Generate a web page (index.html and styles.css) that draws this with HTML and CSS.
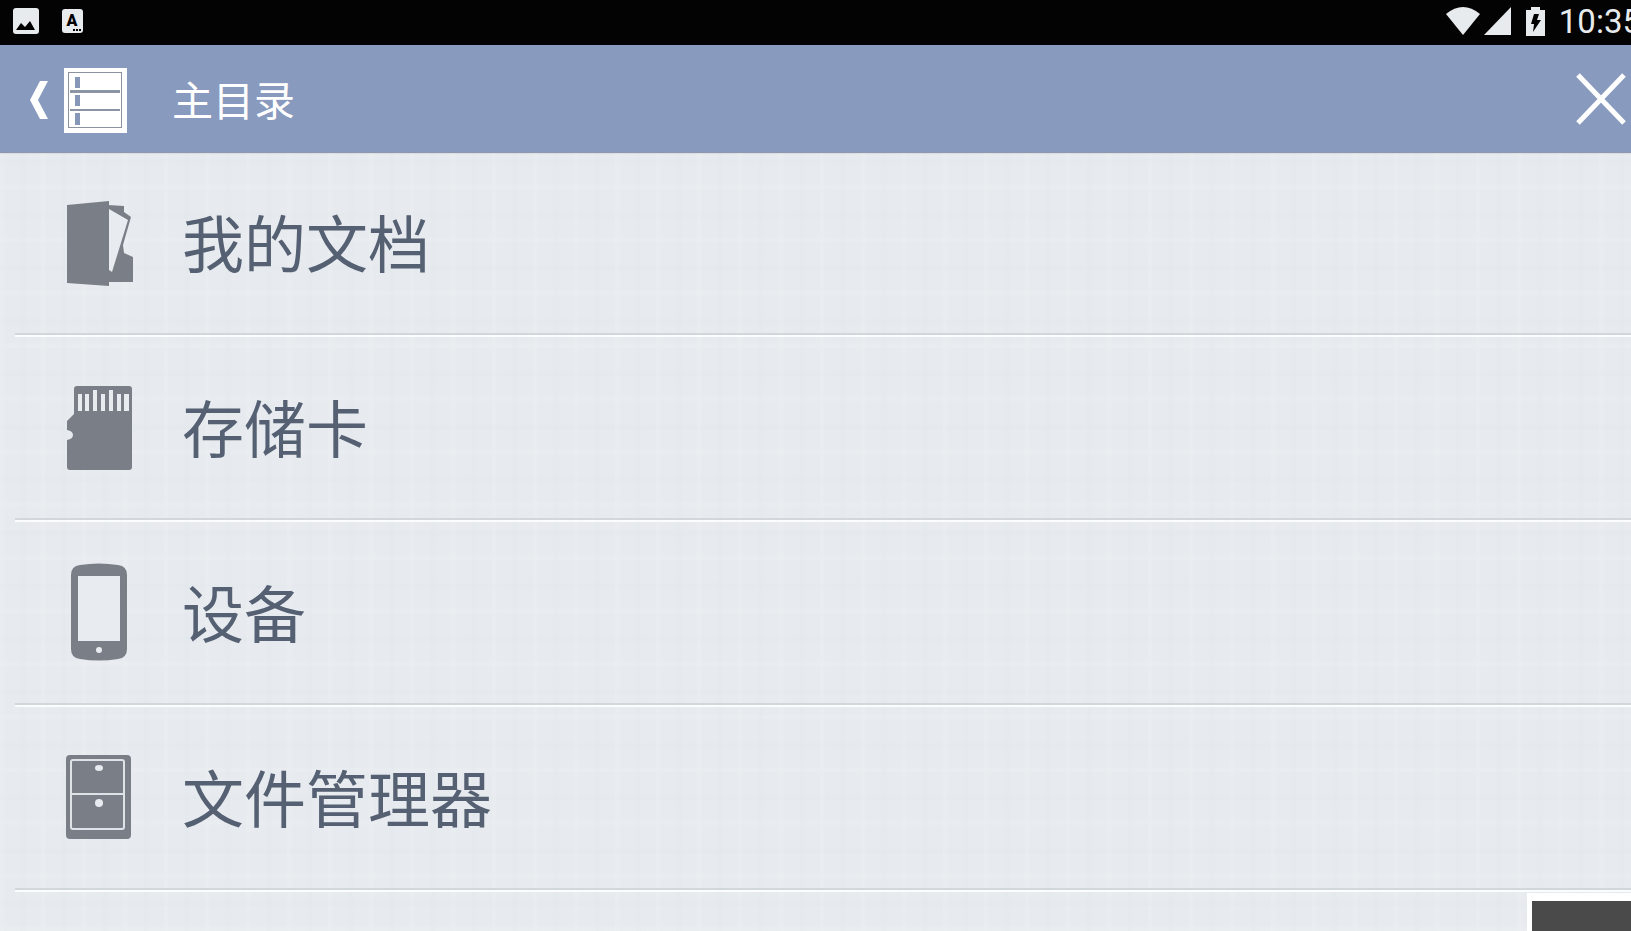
FILE: index.html
```html
<!DOCTYPE html>
<html lang="zh-CN">
<head>
  <meta charset="UTF-8">
  <meta name="viewport" content="width=device-width, initial-scale=1.0">
  <title>主目录</title>
  <link rel="stylesheet" href="styles.css">
</head>
<body>
  <div class="status-bar">
    <div class="status-left">
      <svg width="26" height="26" viewBox="0 0 26 26" aria-hidden="true">
        <rect width="26" height="26" rx="3" fill="#e8ebee"/>
        <path d="M3 22l5-7 4 4 5-6 5 9z" fill="#000"/>
      </svg>
      <svg width="22" height="26" viewBox="0 0 22 26" aria-hidden="true">
        <rect y="1" width="21" height="24" rx="3" fill="#e8ebee"/>
        <text class="keyboard-letter" x="10" y="18" text-anchor="middle">A</text>
        <path d="M11 21h2v2h-2zM14 21h2v2h-2zM17 21h2v2h-2z" fill="#000"/>
      </svg>
    </div>
    <div class="status-right">
      <svg width="34" height="28" viewBox="0 0 34 28" aria-hidden="true">
        <path d="M0 7Q17 -7 34 7L17 28z" fill="#e8ebee"/>
      </svg>
      <svg width="28" height="28" viewBox="0 0 28 28" aria-hidden="true">
        <path d="M27 0v28H0z" fill="#e8ebee"/>
      </svg>
      <svg class="battery" width="19" height="29" viewBox="0 0 19 29" aria-hidden="true">
        <path d="M5 0h9v3h5v26H0V3h5z" fill="#e8ebee"/>
        <path d="M8 7h5l-2 6h4L7 25l1-8H5z" fill="#000"/>
      </svg>
      <span class="clock">10:35</span>
    </div>
  </div>

  <header class="title-bar">
    <button type="button" class="btn-back" aria-label="返回">
      <svg width="18" height="38" viewBox="0 0 18 38" aria-hidden="true">
        <path d="M10 0h8L8 19l10 19h-8L0 19z" fill="#fff"/>
      </svg>
      <svg width="63" height="65" viewBox="0 0 63 65" aria-hidden="true">
        <rect width="63" height="65" fill="#fff"/>
        <rect x="4.500" y="4.500" width="53" height="55" fill="none" stroke="#8c929e"/>
        <path d="M6 22h50v3H6zM6 41h50v2H6z" fill="#8c95a3"/>
        <path d="M11 9h5v11h-5zM11 27h5v11h-5zM11 45h5v12h-5z" fill="#8797b8"/>
      </svg>
    </button>
    <h1>主目录</h1>
    <button type="button" class="btn-close" aria-label="关闭">
      <svg width="50" height="54" viewBox="0 0 50 54" aria-hidden="true">
        <path d="M2 2L48 50M48 2L2 50" stroke="#fff" stroke-width="5"/>
      </svg>
    </button>
  </header>

  <main>
    <ul class="folder-list">
      <li>
        <a href="#documents">
          <svg width="72" height="100" viewBox="0 0 72 100" aria-hidden="true">
            <path d="M3 12L45 8V93L3 90z" fill="#7a7e86"/>
            <path d="M44 12L60 13V19L67 24L59 52L60 60L69 64V89H44z" fill="#7a7e86"/>
            <path d="M45 16L64 27L48 79L45 77z" fill="#e8ecf0"/>
          </svg>
          <span>我的文档</span>
        </a>
      </li>
      <li>
        <a href="#sdcard">
          <svg width="72" height="100" viewBox="0 0 72 100" aria-hidden="true">
            <path d="M13 8H65Q68 8 68 11V89Q68 92 65 92H6Q3 92 3 89V62Q9 61 9 57Q9 53 3 52V43L10 36V11Q10 8 13 8z" fill="#7a7e86"/>
            <path d="M14 16h4v17h-4zM21 16h4v17h-4zM29 12h4v21h-4zM37 16h4v17h-4zM45 12h4v21h-4zM53 16h4v17h-4zM60 16h5v17h-5z" fill="#e8ecf0"/>
          </svg>
          <span>存储卡</span>
        </a>
      </li>
      <li>
        <a href="#device">
          <svg width="72" height="100" viewBox="0 0 72 100" aria-hidden="true">
            <path d="M16 2Q35 -1 54 2Q63 3 63 12V86Q63 95 54 96Q35 99 16 96Q7 95 7 86V12Q7 3 16 2z" fill="#7a7e86"/>
            <rect x="14" y="13" width="42" height="65" fill="#e8ecf0"/>
            <circle cx="35" cy="87" r="3" fill="#e8ecf0"/>
          </svg>
          <span>设备</span>
        </a>
      </li>
      <li>
        <a href="#file-manager">
          <svg width="72" height="100" viewBox="0 0 72 100" aria-hidden="true">
            <rect x="2" y="7" width="65" height="84" rx="4" fill="#7a7e86"/>
            <rect x="7" y="12" width="53" height="69" rx="2" fill="none" stroke="#dfe3e8" stroke-width="2"/>
            <path d="M7 46h53" stroke="#dfe3e8" stroke-width="2"/>
            <ellipse cx="35" cy="20" rx="4" ry="3" fill="#e8ecf0"/>
            <circle cx="35" cy="55" r="4" fill="#e8ecf0"/>
          </svg>
          <span>文件管理器</span>
        </a>
      </li>
    </ul>
  </main>

  <div class="corner-panel"></div>
</body>
</html>
```
FILE: styles.css
```css
:root {
  --bar: #889abe;
  --background: #e7ebef;
  --text: #556073;
  --status: #e8ebee;
}

* {
  margin: 0;
  padding: 0;
  box-sizing: border-box;
}

body {
  min-height: 100vh;
  overflow: hidden;
  font-family: 'Noto Sans CJK SC', sans-serif;
  color: var(--text);
  background-color: var(--background);
  /* faint linen texture */
  background-image:
    repeating-linear-gradient(90deg, rgba(255,255,255,0.08) 0 3px, transparent 6px 19px, rgba(200,212,220,0.08) 23px, transparent 27px 41px),
    repeating-linear-gradient(0deg, rgba(255,255,255,0.08) 0 3px, transparent 6px 23px, rgba(200,212,220,0.08) 27px, transparent 31px 53px);
}

svg {
  display: block;
  flex-shrink: 0;
}

button {
  background: none;
  border: none;
  cursor: pointer;
}

.status-bar {
  display: flex;
  justify-content: space-between;
  height: 45px;
  padding: 0 0 3px 13px;
  background-color: #030303;
  overflow: hidden;
}

.status-left, .status-right {
  display: flex;
  align-items: center;
}

.status-left {
  gap: 23px;
}

.keyboard-letter {
  font-family: Roboto, sans-serif;
  font-size: 16px;
  font-weight: 900;
}

/* the clock runs past the right edge of the screen */
.status-right {
  gap: 4px;
  margin-right: -10px;
}

.battery {
  margin: 0 10px;
}

.clock {
  padding-top: 2px;
  font-family: Roboto, sans-serif;
  font-size: 33px;
  line-height: 42px;
  color: var(--status);
  white-space: nowrap;
}

.title-bar {
  display: flex;
  align-items: center;
  height: 107px;
  padding: 3px 5px 0 30px;
  background-color: var(--bar);
  box-shadow: 0 1px 1px #8e99ad;
}

.btn-back {
  display: flex;
  align-items: center;
  gap: 16px;
}

h1 {
  flex: 1;
  margin-left: 45px;
  padding-bottom: 4px;
  font-size: 41px;
  line-height: 60px;
  font-weight: 400;
  color: #fff;
}

.folder-list {
  padding-left: 15px;
  list-style: none;
}

.folder-list li {
  border-bottom: 2px solid #fafcfd;
}

.folder-list a {
  display: flex;
  align-items: center;
  gap: 46px;
  height: 183px;
  padding-left: 49px;
  border-bottom: 2px solid #d2d7db;
  font-size: 62px;
  line-height: 90px;
  color: var(--text);
  text-decoration: none;
}

.folder-list span {
  padding-bottom: 4px;
}

.corner-panel {
  position: fixed;
  right: 0;
  bottom: 0;
  width: 104px;
  height: 38px;
  background-color: #4a4a4a;
  border-top: 8px solid #fff;
  border-left: 5px solid #fff;
}
```
